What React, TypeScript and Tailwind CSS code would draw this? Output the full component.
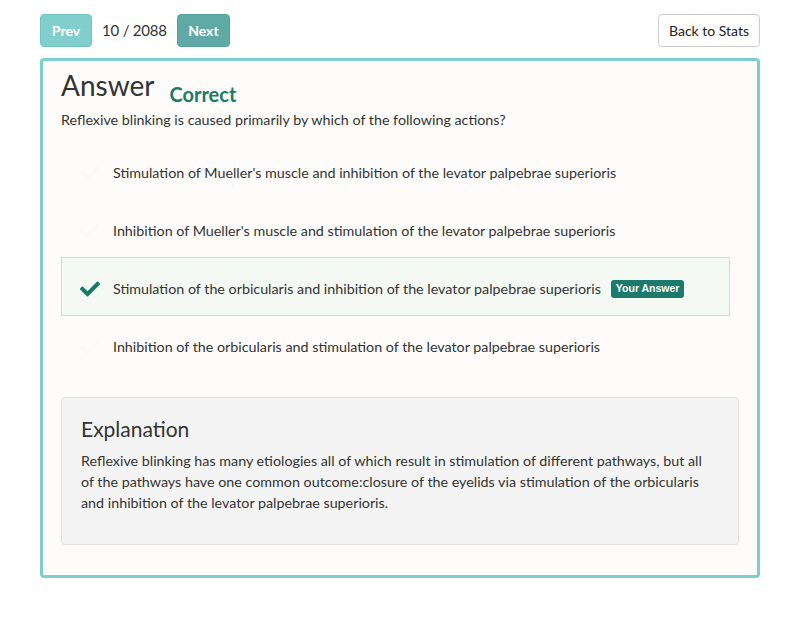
import React from "react";
import { FaCheck } from "react-icons/fa";

const options = [
  "Stimulation of Mueller's muscle and inhibition of the levator palpebrae superioris",
  "Inhibition of Mueller's muscle and stimulation of the levator palpebrae superioris",
  "Stimulation of the orbicularis and inhibition of the levator palpebrae superioris",
  "Inhibition of the orbicularis and stimulation of the levator palpebrae superioris",
];

export default function App() {
  return (
    <div
      className="w-[800px] h-[620px] bg-white text-[#333333]"
      style={{ fontFamily: "Lato, 'Noto Sans', sans-serif" }}
    >
      <div className="px-[40px] pt-[14px]">
        <div className="flex items-center justify-between h-[33px]">
          <div className="flex items-center">
            <button className="h-[33px] w-[52px] rounded-[4px] bg-[#80cfcd] border border-[#74c4c2] text-white font-bold text-[14px]">
              Prev
            </button>
            <span className="ml-[10px] mr-[10px] text-[15px] tracking-[-0.2px] text-[#333]">10 / 2088</span>
            <button className="h-[33px] w-[53px] rounded-[4px] bg-[#5faaa6] border border-[#58a19d] text-white font-bold text-[14px]">
              Next
            </button>
          </div>
          <button className="h-[33px] w-[102px] rounded-[4px] bg-white border border-[#cccccc] text-[14px] text-[#222]">
            Back to Stats
          </button>
        </div>

        <div className="mt-[11px] border-[3px] border-[#7dcfcc] rounded-[4px] bg-[#fdfcfb] px-[18px] pt-[7px] pb-[30px]">
          <div className="flex items-end h-[34px]">
            <h1 className="text-[28px] leading-[34px] text-[#333]">Answer</h1>
            <span className="ml-[15px] mb-[-7px] text-[20px] font-bold text-[#1b7a68]">Correct</span>
          </div>
          <p className="mt-[8px] text-[14.3px] leading-[20px] text-[#333]">
            Reflexive blinking is caused primarily by which of the following actions?
          </p>

          <div className="mt-[14px] w-[669px]">
            {options.map((opt, i) => {
              const selected = i === 2;
              return (
                <div
                  key={i}
                  className={
                    selected
                      ? "flex items-center h-[59px] -mt-[3px] mb-[2px] pt-[4px] bg-[#f4f9f4] border border-[#c9e2c8]"
                      : "flex items-center h-[58px] border border-transparent"
                  }
                >
                  <div className="w-[51px] flex justify-center pl-[4px]">
                    <FaCheck
                      className={selected ? "text-[#1b7a6b]" : "text-[#fafafa]"}
                      size={20}
                    />
                  </div>
                  <span className="text-[14.3px] text-[#333]">{opt}</span>
                  {selected && (
                    <span
                      className="ml-[10px] h-[18px] px-[5px] rounded-[3px] bg-[#1b7a6b] text-white text-[10.5px] font-bold flex items-center"
                      style={{ fontFamily: "'Liberation Sans', Arial, sans-serif" }}
                    >
                      Your Answer
                    </span>
                  )}
                </div>
              );
            })}
          </div>

          <div className="mt-[21px] bg-[#f4f4f4] border border-[#e1e1e1] rounded-[4px] px-[19px] pt-[16px] pb-[31px]">
            <h2 className="text-[21px] leading-[30px] text-[#333]">Explanation</h2>
            <p className="mt-[6px] text-[14.3px] leading-[21px] text-[#333]">
              Reflexive blinking has many etiologies all of which result in stimulation of different pathways, but all
              <br />
              of the pathways have one common outcome:closure of the eyelids via stimulation of the orbicularis
              <br />
              and inhibition of the levator palpebrae superioris.
            </p>
          </div>
        </div>
      </div>
    </div>
  );
}
